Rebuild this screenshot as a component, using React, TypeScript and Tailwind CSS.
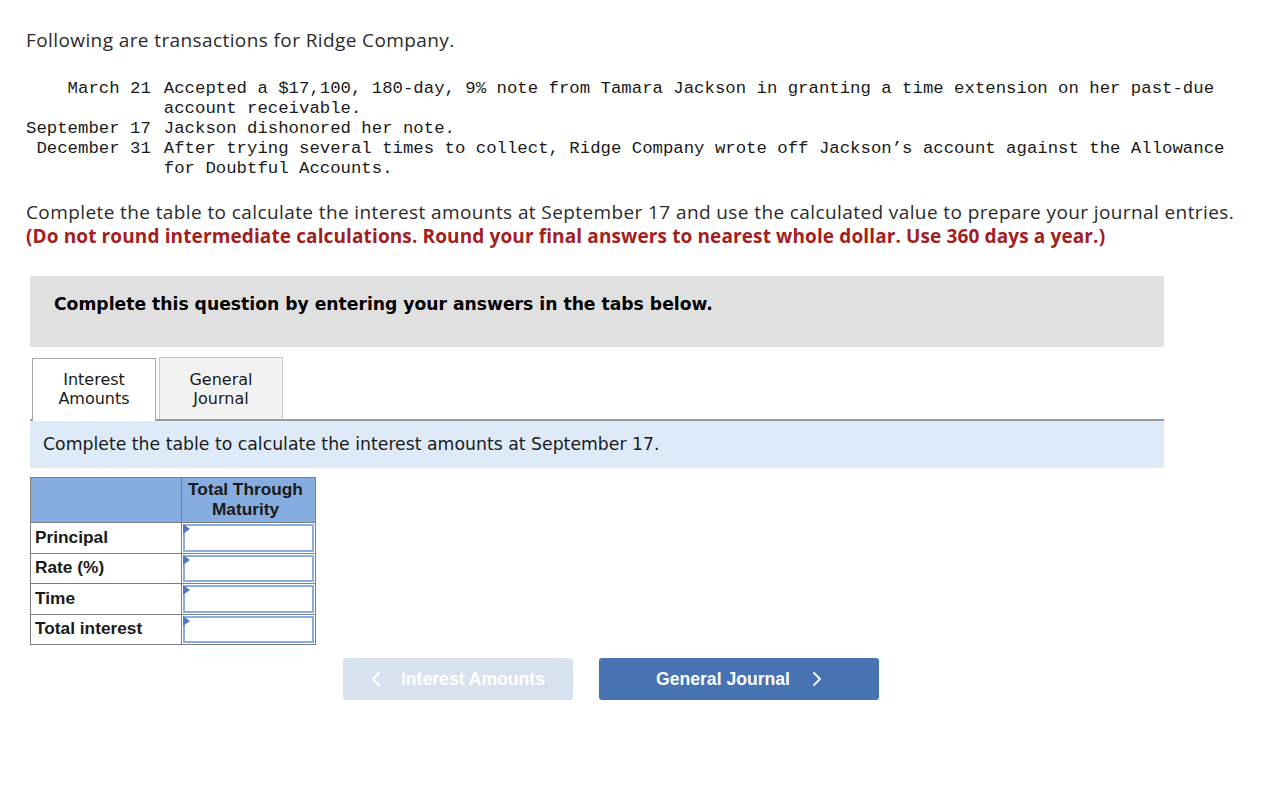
import React from "react";

const proxima = { fontFamily: '"Open Sans", "Lato", Arial, sans-serif' };

function InputCell() {
  return (
    <td className="border border-[#7f7f7f] p-0 h-[30px] relative">
      <div className="absolute inset-[1px] border-2 border-[#89aee0] bg-white"></div>
      <div className="absolute left-[1px] top-[1px] w-0 h-0 border-y-[5px] border-y-transparent border-l-[7px] border-l-[#4a7ac0]"></div>
    </td>
  );
}

function Chevron({ dir }: { dir: "l" | "r" }) {
  return (
    <svg width="10" height="16" viewBox="0 0 10 16" className="inline-block">
      <path
        d={dir === "l" ? "M8 2 L2 8 L8 14" : "M2 2 L8 8 L2 14"}
        fill="none"
        stroke="currentColor"
        strokeWidth="1.8"
        strokeLinecap="round"
        strokeLinejoin="round"
      />
    </svg>
  );
}

export default function App() {
  const rows = ["Principal", "Rate (%)", "Time", "Total interest"];
  return (
    <div className="w-[1288px] h-[790px] bg-white text-[#1a1a1a] pl-[26px] pt-[27px]">
      <p className="text-[19px] leading-[26px] text-[#2a2a2a] tracking-[0.4px]" style={proxima}>
        Following are transactions for Ridge Company.
      </p>
      <table
        className="mt-[26px] text-[17.33px] leading-[20px] text-[#1a1a1a]"
        style={{ fontFamily: '"Liberation Mono", "Courier New", monospace' }}
      >
        <tbody>
          <tr className="align-top">
            <td className="text-right whitespace-pre pr-[13px]">March 21</td>
            <td>Accepted a $17,100, 180-day, 9% note from Tamara Jackson in granting a time extension on her past-due<br />account receivable.</td>
          </tr>
          <tr className="align-top">
            <td className="text-right whitespace-pre pr-[13px]">September 17</td>
            <td>Jackson dishonored her note.</td>
          </tr>
          <tr className="align-top">
            <td className="text-right whitespace-pre pr-[13px]">December 31</td>
            <td>After trying several times to collect, Ridge Company wrote off Jackson’s account against the Allowance<br />for Doubtful Accounts.</td>
          </tr>
        </tbody>
      </table>
      <p className="mt-[21px] text-[19px] leading-[24px] text-[#2a2a2a] tracking-[0.4px]" style={proxima}>
        Complete the table to calculate the interest amounts at September 17 and use the calculated value to prepare your journal entries.
      </p>
      <p className="text-[19px] leading-[24px] font-bold text-[#a3201d] tracking-[0.12px]" style={proxima}>
        (Do not round intermediate calculations. Round your final answers to nearest whole dollar. Use 360 days a year.)
      </p>

      <div className="ml-[4px] w-[1134px]" style={{ fontFamily: '"DejaVu Sans", Verdana, sans-serif' }}>
        <div className="mt-[28px] h-[71px] bg-[#e0e0e0] pl-[24px] pt-[17px]">
          <p className="text-[17.2px] font-bold text-black leading-[22px]">
            Complete this question by entering your answers in the tabs below.
          </p>
        </div>

        <div className="mt-[10px] flex items-end gap-[3px] pl-[2px] border-b-2 border-[#9b9b9b]">
          <div className="w-[124px] h-[63px] border border-[#a8a8a8] border-b-0 bg-white flex items-center justify-center text-center text-[16px] leading-[19px] text-[#1a1a1a] -mb-[2px] pb-[2px]">
            Interest<br />Amounts
          </div>
          <div className="w-[124px] h-[62px] border border-[#c8c8c8] border-b-0 bg-[#f2f2f2] flex items-center justify-center text-center text-[16px] leading-[19px] text-[#1a1a1a]">
            General<br />Journal
          </div>
        </div>

        <div className="h-[47px] bg-[#deeaf7] pl-[13px] flex items-center text-[17.3px] text-[#1a1a1a]">
          Complete the table to calculate the interest amounts at September 17.
        </div>

        <table
          className="mt-[9px] border-collapse border border-[#7f7f7f] text-[17.3px] text-[#1a1a1a]"
          style={{ fontFamily: '"Liberation Sans", Arial, sans-serif' }}
        >
          <thead>
            <tr className="bg-[#86addf] h-[45px]">
              <th className="w-[151px] border border-[#7f7f7f]"></th>
              <th className="w-[134px] border border-[#7f7f7f] font-bold leading-[20px] align-top pt-[1px] pr-[6px]">
                Total Through<br />Maturity
              </th>
            </tr>
          </thead>
          <tbody>
            {rows.map((r) => (
              <tr key={r} className="h-[30.5px]">
                <td className="border border-[#7f7f7f] font-bold pl-[4px] text-left">{r}</td>
                <InputCell />
              </tr>
            ))}
          </tbody>
        </table>

        <div className="mt-[13px] flex gap-[26px] pl-[313px]" style={{ fontFamily: '"Liberation Sans", Arial, sans-serif' }}>
          <div className="w-[230px] h-[42px] rounded-[3px] bg-[#d8e2ef] flex items-center justify-center text-white font-bold text-[17.6px]">
            <span className="mr-[20px] flex"><Chevron dir="l" /></span>Interest Amounts
          </div>
          <div className="w-[280px] h-[42px] rounded-[3px] bg-[#4773b3] flex items-center justify-center text-white font-bold text-[17.6px]">
            General Journal<span className="ml-[22px] flex"><Chevron dir="r" /></span>
          </div>
        </div>
      </div>
    </div>
  );
}
